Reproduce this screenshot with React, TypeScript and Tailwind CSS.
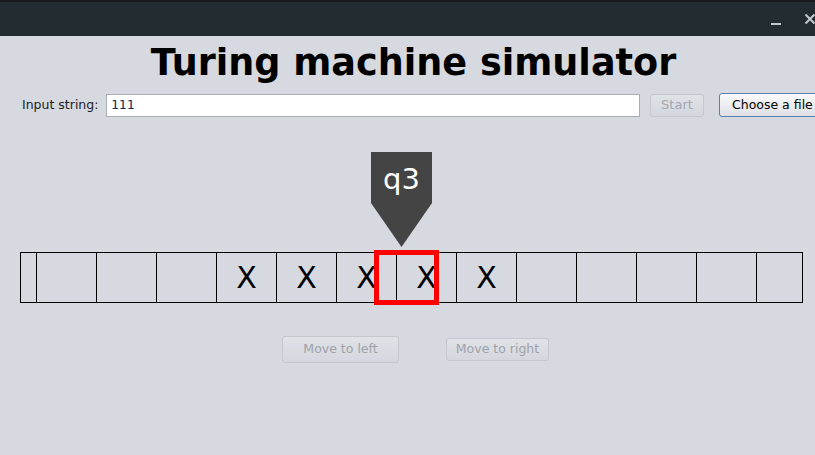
import React from "react";

const cells: string[] = ["", "", "", "", "X", "X", "X", "X", "X", "", "", "", "", ""];

export default function App() {
  const font = { fontFamily: '"DejaVu Sans", sans-serif' };
  return (
    <div className="w-[815px] h-[455px] overflow-hidden bg-[#d6d9e0] relative" style={font}>
      {/* title bar */}
      <div className="h-[36px] bg-[#232c31] border-t-2 border-[#171b1e] relative">
        <svg className="absolute left-[770px] top-[19px]" width="12" height="6" viewBox="0 0 12 6">
          <rect x="1" y="2" width="10" height="2" fill="#c3cbd0" />
        </svg>
        <svg className="absolute left-[804px] top-[11px]" width="12" height="12" viewBox="0 0 12 12">
          <path d="M1.5 1.5 L10.5 10.5 M10.5 1.5 L1.5 10.5" stroke="#c3cbd0" strokeWidth="2" />
        </svg>
      </div>

      {/* title */}
      <div className="mt-[9px] h-[37px] pl-[12px] text-center text-[36.6px] leading-none font-bold text-black">
        Turing machine simulator
      </div>

      {/* input row */}
      <div className="mt-[11px] flex items-center h-[24px] pl-[22px]">
        <span className="shrink-0 text-[12.5px] text-[#1c1c1c] w-[84px]">Input string:</span>
        <div className="shrink-0 w-[534px] h-[23px] bg-white border border-[#a9adb4] flex items-center pl-[4px]">
          <span className="text-[13px] text-[#0f2d5c]" style={{ fontFamily: '"DejaVu Sans Mono", monospace' }}>111</span>
        </div>
        <div className="shrink-0 ml-[10px] w-[54px] h-[23px] rounded-[3px] border border-[#c3c7ce] bg-gradient-to-b from-[#dfe2e7] to-[#d4d7dd] flex items-center justify-center text-[13px] text-[#a3a7ad]">
          Start
        </div>
        <div className="shrink-0 ml-[15px] w-[110px] h-[24px] rounded-[3px] border border-[#5f7fb3] bg-gradient-to-b from-[#fbfbfc] to-[#dde0e5] flex items-center pl-[12px] text-[12.5px] text-black">
          Choose a file
        </div>
      </div>

      {/* head pointer */}
      <div className="mt-[35px] ml-[371px] h-[95px]">
        <div className="relative w-[61px] h-[95px]">
          <svg width="61" height="95" viewBox="0 0 61 95" className="absolute left-0 top-0">
            <polygon points="0,0 61,0 61,51 30.5,95 0,51" fill="#444444" />
          </svg>
          <div className="absolute left-0 top-[13px] w-[61px] text-center text-white text-[29px] leading-none">q3</div>
        </div>
      </div>

      {/* tape */}
      <div className="mt-[5px] ml-[20px] relative w-[783px]">
        <div className="flex h-[51px] border border-black">
          {cells.map((c, i) => {
            const w = i === 0 ? "w-[16px]" : i === cells.length - 1 ? "w-[45px]" : "w-[60px]";
            const br = i === cells.length - 1 ? "" : "border-r border-black";
            return (
              <div key={i} className={`${w} ${br} shrink-0 flex items-center justify-center text-[30px] text-black leading-none`}>
                {c}
              </div>
            );
          })}
        </div>
        <div className="absolute left-[354px] top-[-2px] w-[65px] h-[55px] border-[5px] border-[#ff0000]" />
      </div>

      {/* move buttons */}
      <div className="mt-[33px] flex items-start">
        <div className="ml-[282px] w-[117px] h-[27px] rounded-[3px] border border-[#c3c7ce] bg-gradient-to-b from-[#dfe2e7] to-[#d4d7dd] flex items-center justify-center text-[12.5px] text-[#9ea2a8]">
          Move to left
        </div>
        <div className="ml-[47px] mt-[2px] w-[103px] h-[23px] rounded-[3px] border border-[#c3c7ce] bg-gradient-to-b from-[#dfe2e7] to-[#d4d7dd] flex items-center justify-center text-[12.5px] text-[#9ea2a8]">
          Move to right
        </div>
      </div>
    </div>
  );
}
